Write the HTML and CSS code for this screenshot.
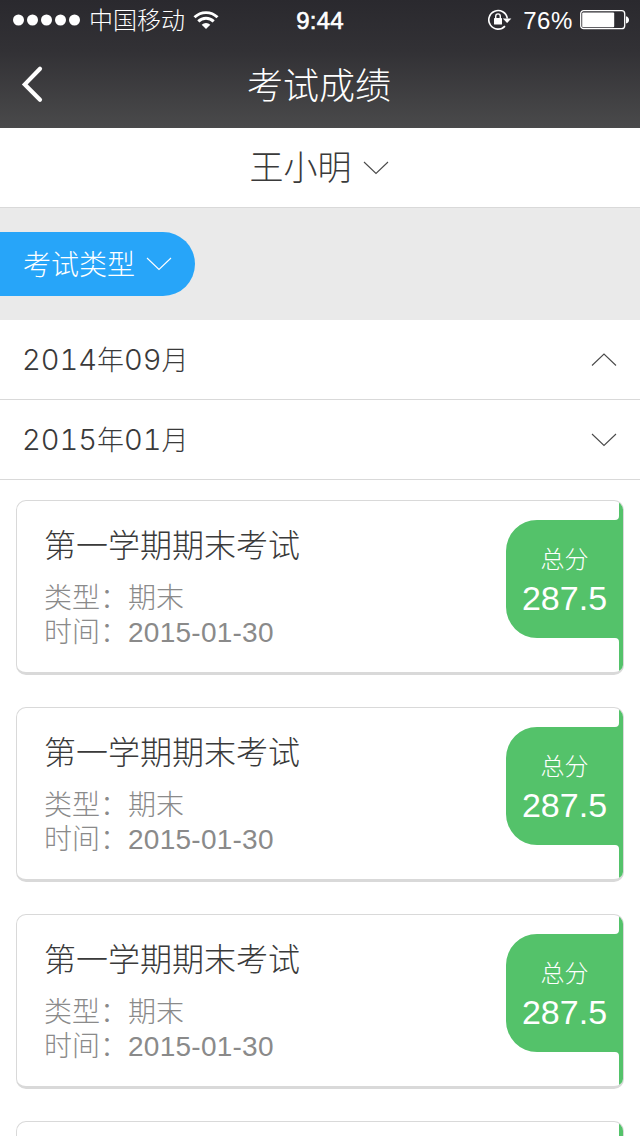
FILE: index.html
```
<!DOCTYPE html>
<html lang="zh-CN">
<head>
<meta charset="utf-8">
<title>考试成绩</title>
<link rel="stylesheet" href="styles.css">
</head>
<body>
<div class="screen">
  <header class="header">
    <div class="status">
      <div class="status-left">
        <svg class="dots" width="68" height="12" viewBox="0 0 68 12" fill="#fff"><circle cx="5.5" cy="6" r="5.5"/><circle cx="19.5" cy="6" r="5.5"/><circle cx="33.5" cy="6" r="5.5"/><circle cx="47.5" cy="6" r="5.5"/><circle cx="61.5" cy="6" r="5.5"/></svg>
        <span class="carrier">中国移动</span>
        <svg class="wifi" width="26" height="20" viewBox="0 0 26 20" fill="none" stroke="#fff" stroke-width="2.9"><path d="M1.5 7.3a16.4 16.4 0 0 1 23 0"/><path d="M5.3 11.4a11 11 0 0 1 15.4 0"/><path d="M13 19l-4.3-4.3a6.2 6.2 0 0 1 8.6 0z" fill="#fff" stroke="none"/></svg>
      </div>
      <span class="time">9:44</span>
      <div class="status-right">
        <svg class="lock" width="24" height="22" viewBox="0 0 24 22"><path d="M17 17.1A9.3 9.3 0 1 1 19.3 9.5" fill="none" stroke="#fff" stroke-width="1.6"/><path d="M14.8 9.5H23.4L19.1 14z" fill="#fff"/><rect x="6" y="9" width="8" height="6.6" rx=".6" fill="#fff"/><path d="M7.7 9.3V7.2a2.3 2.3 0 0 1 4.6 0v2.1" fill="none" stroke="#fff" stroke-width="1.4"/></svg>
        <span class="percent">76%</span>
        <svg class="battery" width="50" height="20" viewBox="0 0 50 20"><rect x=".7" y=".7" width="44" height="18" rx="3" fill="none" stroke="#fff" stroke-width="1.3"/><rect x="2.2" y="2.4" width="32" height="14.8" rx="1" fill="#fff"/><path d="M46 6.2q3 1 3 3.7t-3 3.7z" fill="#fff"/></svg>
      </div>
    </div>
    <nav class="nav">
      <svg class="back" width="24" height="40" viewBox="0 0 24 40" fill="none" stroke="#fff" stroke-width="4.2" stroke-linecap="round" stroke-linejoin="miter"><path d="M21 4.8L5.8 20.4L21 35.8"/></svg>
      <h1 class="title">考试成绩</h1>
    </nav>
  </header>
  <div class="student">
    <span class="student-name">王小明</span>
    <svg class="chevron" width="26" height="14" viewBox="0 0 26 14"><path d="M1 1L13 12.5L25 1"/></svg>
  </div>
  <div class="filter">
    <div class="pill">
      <span class="pill-text">考试类型</span>
      <svg class="chevron" width="26" height="14" viewBox="0 0 26 14"><path d="M1 1L13 12.5L25 1"/></svg>
    </div>
  </div>
  <div class="month">
    <span class="month-text"><span class="num">2014</span>年<span class="num">09</span>月</span>
    <svg class="chevron" width="26" height="14" viewBox="0 0 26 14"><path d="M1 12.5L13 1L25 12.5"/></svg>
  </div>
  <div class="month">
    <span class="month-text"><span class="num">2015</span>年<span class="num">01</span>月</span>
    <svg class="chevron" width="26" height="14" viewBox="0 0 26 14"><path d="M1 1L13 12.5L25 1"/></svg>
  </div>
  <main class="list">
    <article class="card">
      <div class="info"><h2 class="name">第一学期期末考试</h2><p>类型：期末</p><p>时间：<span class="date">2015-01-30</span></p></div>
      <div class="score"><svg class="tab" width="117" height="171" viewBox="0 0 117 171"><path d="M113 0V15Q113 19 109 19H31A31 31 0 0 0 0 50V106A31 31 0 0 0 31 137H109Q113 137 113 141V171H117V0z"/></svg><span class="label">总分</span><span class="value">287.5</span></div>
    </article>
    <article class="card">
      <div class="info"><h2 class="name">第一学期期末考试</h2><p>类型：期末</p><p>时间：<span class="date">2015-01-30</span></p></div>
      <div class="score"><svg class="tab" width="117" height="171" viewBox="0 0 117 171"><path d="M113 0V15Q113 19 109 19H31A31 31 0 0 0 0 50V106A31 31 0 0 0 31 137H109Q113 137 113 141V171H117V0z"/></svg><span class="label">总分</span><span class="value">287.5</span></div>
    </article>
    <article class="card">
      <div class="info"><h2 class="name">第一学期期末考试</h2><p>类型：期末</p><p>时间：<span class="date">2015-01-30</span></p></div>
      <div class="score"><svg class="tab" width="117" height="171" viewBox="0 0 117 171"><path d="M113 0V15Q113 19 109 19H31A31 31 0 0 0 0 50V106A31 31 0 0 0 31 137H109Q113 137 113 141V171H117V0z"/></svg><span class="label">总分</span><span class="value">287.5</span></div>
    </article>
    <article class="card">
      <div class="info"></div>
      <div class="score"><svg class="tab" width="117" height="171" viewBox="0 0 117 171"><path d="M113 0V15Q113 19 109 19H31A31 31 0 0 0 0 50V106A31 31 0 0 0 31 137H109Q113 137 113 141V171H117V0z"/></svg></div>
    </article>
  </main>
</div>
</body>
</html>
```
FILE: styles.css
```
* { box-sizing: border-box; margin: 0; padding: 0; }
body { background: #fff; color: #3a3a3a; font-family: "Liberation Sans", "Noto Sans CJK SC", sans-serif; font-weight: 300; }
.screen { width: 640px; height: 1136px; overflow: hidden; }
svg { display: block; flex: none; }
.header { height: 128px; color: #fff; background: linear-gradient(#2a292e, #323135 40%, #4a4a4b); }
.status { display: grid; grid-template-columns: 1fr auto 1fr; align-items: center; height: 40px; padding: 0 11px 0 13px; line-height: 40px; }
.status-left, .status-right { display: flex; align-items: center; }
.status-right { justify-content: flex-end; }
.carrier { margin-left: 8px; padding-top: 2px; font-size: 24px; line-height: 38px; }
.wifi { margin-left: 8px; }
.time { margin-left: -2px; padding-top: 2px; font-size: 24px; line-height: 38px; letter-spacing: .2px; -webkit-text-stroke: .6px #fff; }
.lock { margin-right: -1px; }
.percent { margin: 0 7px 0 12px; padding-top: 2px; font-size: 24px; line-height: 38px; letter-spacing: .6px; }
.battery { margin-right: -1px; }
.nav { display: grid; grid-template-columns: 100px 1fr 100px; align-items: center; height: 88px; }
.back { margin-left: 19px; }
.title { padding-top: 6px; font-size: 36px; font-weight: 300; line-height: 82px; text-align: center; margin-left: -2px; }
.chevron { fill: none; stroke: #4a4a4a; stroke-width: 1.1; }
.student { display: flex; align-items: center; justify-content: center; gap: 11px; height: 80px; padding-right: 2px; border-bottom: 1px solid #d9d9d9; font-size: 34px; }
.student-name { padding-bottom: 4px; }
.filter { height: 112px; padding-top: 24px; background: #eaeaea; }
.pill { display: flex; align-items: center; justify-content: space-between; width: 195px; height: 64px; padding: 0 23px; border-radius: 0 32px 32px 0; background: #27a5f9; color: #fff; font-size: 28px; }
.pill-text { padding-bottom: 2px; }
.pill .chevron { stroke: #fff; }
.month { display: flex; align-items: center; justify-content: space-between; height: 80px; padding: 0 23px 0 22px; border-bottom: 1px solid #d9d9d9; font-size: 27px; }
.month-text { padding-bottom: 2px; }
.num { font-family: Inter, sans-serif; font-size: 29px; font-variant-numeric: tabular-nums; }
.list { display: flex; flex-direction: column; gap: 32px; padding: 20px 16px 0; }
.card { display: flex; justify-content: space-between; flex: none; height: 175px; border: 1px solid #d9d9d9; border-bottom-width: 3px; border-radius: 10px; overflow: hidden; }
.info { padding: 21px 0 0 27px; color: #8a8a8a; font-size: 28px; line-height: 34px; }
.name { margin-bottom: 12px; color: #3a3a3a; font-size: 32px; font-weight: 300; line-height: 48px; }
.date { letter-spacing: .25px; }
.score { position: relative; display: flex; flex-direction: column; align-items: center; width: 117px; padding-top: 41px; color: #fff; }
.tab { position: absolute; top: 0; right: 0; fill: #54c26a; }
.label { position: relative; font-size: 24px; line-height: 36px; }
.value { position: relative; font-size: 34px; line-height: 40px; }
```
